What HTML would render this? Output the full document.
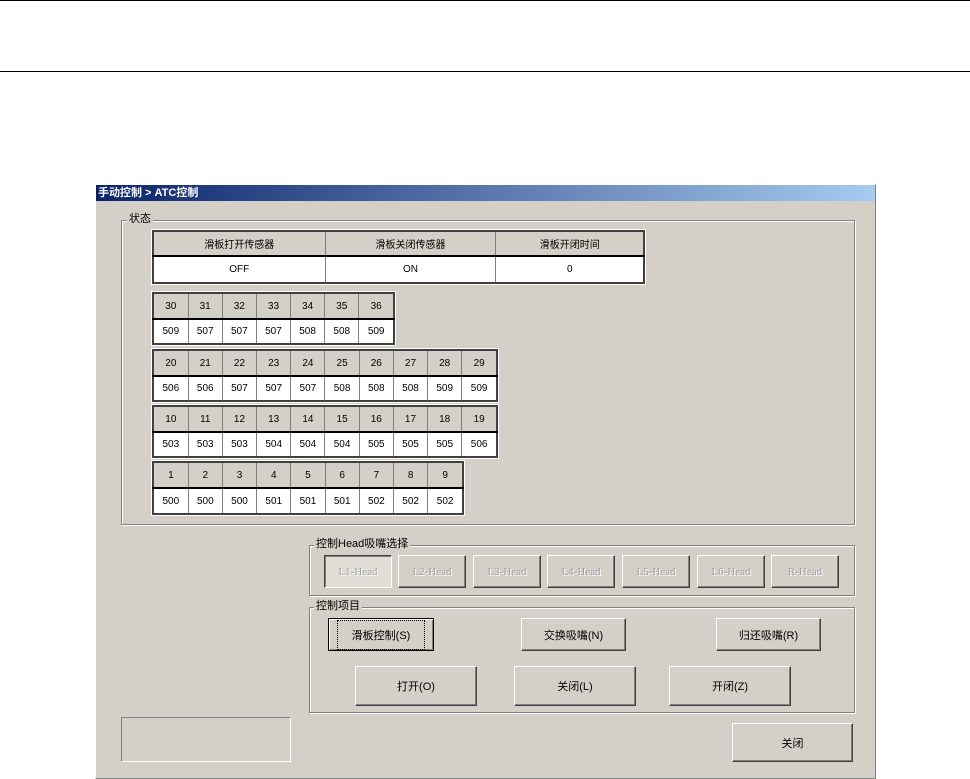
<!DOCTYPE html>
<html><head><meta charset="utf-8"><style>
*{box-sizing:border-box;margin:0;padding:0}
body{width:970px;height:779px;background:#fff;position:relative;overflow:hidden;font-family:"Liberation Sans","Noto Sans CJK SC",sans-serif;font-size:11px;color:#000}
.abs{position:absolute}
.win{left:95px;top:184px;width:781px;height:595px;background:#d4d0c8;border:1px solid #808080;border-top-color:#fff;border-left-color:#fff}
.title{left:96px;top:185px;width:779px;height:16px;background:linear-gradient(90deg,#0a246a,#a6caf0);color:#fff;font-weight:bold;font-size:11px;line-height:16px;padding-left:2px}
.grp{border:1px solid #808080;box-shadow:1px 1px 0 #fff, inset 1px 1px 0 #fff}
.lbl{background:#d4d0c8;padding:0 2px;font-size:11px;line-height:12px}
table{border-collapse:collapse;position:absolute;background:#fff;border:2px solid #404040;outline:1px solid #fff}
td{border:1px solid #808080;text-align:center;font-size:10px;padding:0}
tr.h td{background:#d4d0c8;border-bottom:2px solid #000}
.btn{position:absolute;background:#d4d0c8;border:1px solid;border-color:#fff #404040 #404040 #fff;box-shadow:inset -1px -1px 0 #808080;text-align:center;font-size:11px;display:flex;align-items:center;justify-content:center}
.dis{color:#a0a0a0;text-shadow:1px 1px 0 #fff;font-family:"Liberation Serif",serif}
</style></head><body>
<div class="abs" style="left:0;top:0;width:970px;height:1px;background:#000"></div>
<div class="abs" style="left:0;top:71px;width:970px;height:1px;background:#000"></div>
<div class="abs win"></div>
<div class="abs title">手动控制 &gt; ATC控制</div>

<div class="abs grp" style="left:121px;top:220px;width:734px;height:305px"></div>
<div class="abs lbl" style="left:127px;top:213px">状态</div>

<table style="left:152px;top:230px;width:493px;height:54px">
<tr class="h" style="height:25px"><td>滑板打开传感器</td><td>滑板关闭传感器</td><td>滑板开闭时间</td></tr>
<tr><td>OFF</td><td>ON</td><td>0</td></tr></table>

<table style="left:152px;top:292px;width:243px;height:53px">
<tr class="h" style="height:26px"><td>30</td><td>31</td><td>32</td><td>33</td><td>34</td><td>35</td><td>36</td></tr>
<tr><td>509</td><td>507</td><td>507</td><td>507</td><td>508</td><td>508</td><td>509</td></tr></table>

<table style="left:152px;top:349px;width:346px;height:53px">
<tr class="h" style="height:26px"><td>20</td><td>21</td><td>22</td><td>23</td><td>24</td><td>25</td><td>26</td><td>27</td><td>28</td><td>29</td></tr>
<tr><td>506</td><td>506</td><td>507</td><td>507</td><td>507</td><td>508</td><td>508</td><td>508</td><td>509</td><td>509</td></tr></table>

<table style="left:152px;top:405px;width:346px;height:53px">
<tr class="h" style="height:26px"><td>10</td><td>11</td><td>12</td><td>13</td><td>14</td><td>15</td><td>16</td><td>17</td><td>18</td><td>19</td></tr>
<tr><td>503</td><td>503</td><td>503</td><td>504</td><td>504</td><td>504</td><td>505</td><td>505</td><td>505</td><td>506</td></tr></table>

<table style="left:152px;top:461px;width:312px;height:54px">
<tr class="h" style="height:26px"><td>1</td><td>2</td><td>3</td><td>4</td><td>5</td><td>6</td><td>7</td><td>8</td><td>9</td></tr>
<tr><td>500</td><td>500</td><td>500</td><td>501</td><td>501</td><td>501</td><td>502</td><td>502</td><td>502</td></tr></table>

<div class="abs grp" style="left:309px;top:545px;width:546px;height:51px"></div>
<div class="abs lbl" style="left:314px;top:538px">控制Head吸嘴选择</div>
<div class="btn dis" style="left:324px;top:555px;width:68px;height:33px;border-color:#404040 #fff #fff #404040;box-shadow:inset 1px 1px 0 #808080;background:#e0ddd6">L1-Head</div>
<div class="btn dis" style="left:398px;top:555px;width:68px;height:33px">L2-Head</div>
<div class="btn dis" style="left:473px;top:555px;width:68px;height:33px">L3-Head</div>
<div class="btn dis" style="left:547px;top:555px;width:68px;height:33px">L4-Head</div>
<div class="btn dis" style="left:622px;top:555px;width:68px;height:33px">L5-Head</div>
<div class="btn dis" style="left:697px;top:555px;width:68px;height:33px">L6-Head</div>
<div class="btn dis" style="left:771px;top:555px;width:68px;height:33px">R-Head</div>

<div class="abs grp" style="left:309px;top:607px;width:546px;height:106px"></div>
<div class="abs lbl" style="left:314px;top:600px">控制项目</div>
<div class="btn" style="left:328px;top:618px;width:106px;height:33px;border:1px solid #000;box-shadow:inset 1px 1px 0 #fff,inset -1px -1px 0 #808080"><span style="border:1px dotted #000;padding:6px 14px">滑板控制(S)</span></div>
<div class="btn" style="left:521px;top:618px;width:105px;height:33px">交换吸嘴(N)</div>
<div class="btn" style="left:716px;top:618px;width:105px;height:33px">归还吸嘴(R)</div>
<div class="btn" style="left:355px;top:666px;width:122px;height:40px">打开(O)</div>
<div class="btn" style="left:514px;top:666px;width:122px;height:40px">关闭(L)</div>
<div class="btn" style="left:669px;top:666px;width:122px;height:40px">开闭(Z)</div>

<div class="abs" style="left:121px;top:717px;width:170px;height:45px;border:1px solid;border-color:#808080 #fff #fff #808080"></div>
<div class="btn" style="left:732px;top:723px;width:121px;height:39px">关闭</div>
</body></html>
